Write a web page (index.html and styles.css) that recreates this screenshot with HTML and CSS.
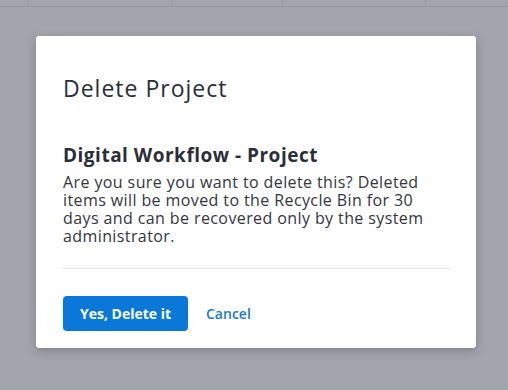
FILE: index.html
```html
<!DOCTYPE html>
<html>
<head>
    <link rel="stylesheet" href="styles.css">
</head>
<body>
    <!-- faded table header behind the overlay -->
    <div class="table-head">
        <div class="cell c1"></div>
        <div class="cell c2"></div>
        <div class="cell c3"></div>
        <div class="cell c4"></div>
        <div class="cell c5"></div>
    </div>

    <div class="overlay">
        <div class="modal">
            <h1 class="modal-title">Delete Project</h1>
            <div class="modal-body">
                <h2 class="item-name">Digital Workflow - Project</h2>
                <p class="warning">Are you sure you want to delete this? Deleted items will be moved to the Recycle Bin for 30 days and can be recovered only by the system administrator.</p>
            </div>
            <div class="modal-footer">
                <button class="delete-button">Yes, Delete it</button>
                <a href="#" class="cancel-link">Cancel</a>
            </div>
        </div>
    </div>
</body>
</html>
```

FILE: styles.css
```css
body {
    margin: 0;
    background-color: #a2a5ac;
    font-family: "Open Sans", Arial, sans-serif;
    height: 390px;
    overflow: hidden;
}

.table-head {
    display: flex;
    height: 6px;
    border-bottom: 1px solid #94979f;
}

.cell {
    border-right: 1px solid #9a9da4;
}

.c1 { width: 28px; }
.c2 { width: 143px; }
.c3 { width: 109px; }
.c4 { width: 142px; }
.c5 { flex: 1; border-right: none; }

.overlay {
    padding: 29px 36px 0 36px;
}

.modal {
    background-color: #ffffff;
    border-radius: 3px;
    box-shadow: 0 3px 10px rgba(60, 64, 72, 0.35);
    padding: 0 26px 0 27px;
    width: 440px;
    height: 312px;
    box-sizing: border-box;
}

.modal-title {
    margin: 0;
    padding-top: 37px;
    font-size: 23px;
    font-weight: 400;
    letter-spacing: 1px;
    color: #2a2e37;
    line-height: 30px;
}

.modal-body {
    margin-top: 40px;
    padding-bottom: 23px;
    border-bottom: 1px solid #dedfe2;
}

.item-name {
    margin: 0;
    font-size: 19px;
    font-weight: 700;
    letter-spacing: 0.5px;
    color: #2a2e37;
    line-height: 24px;
}

.warning {
    margin: 6px 0 0 0;
    font-size: 16px;
    letter-spacing: 0.4px;
    line-height: 18px;
    color: #33363d;
}

.modal-footer {
    display: flex;
    align-items: center;
    margin-top: 27px;
}

.delete-button {
    background-color: #0a78d8;
    color: white;
    font-family: "Open Sans", Arial, sans-serif;
    font-weight: bold;
    font-size: 14px;
    border: none;
    border-radius: 4px;
    width: 125px;
    height: 35px;
    cursor: pointer;
}

.cancel-link {
    margin-left: 18px;
    color: #1a7ad0;
    font-weight: 600;
    font-size: 14px;
    text-decoration: none;
}
```
